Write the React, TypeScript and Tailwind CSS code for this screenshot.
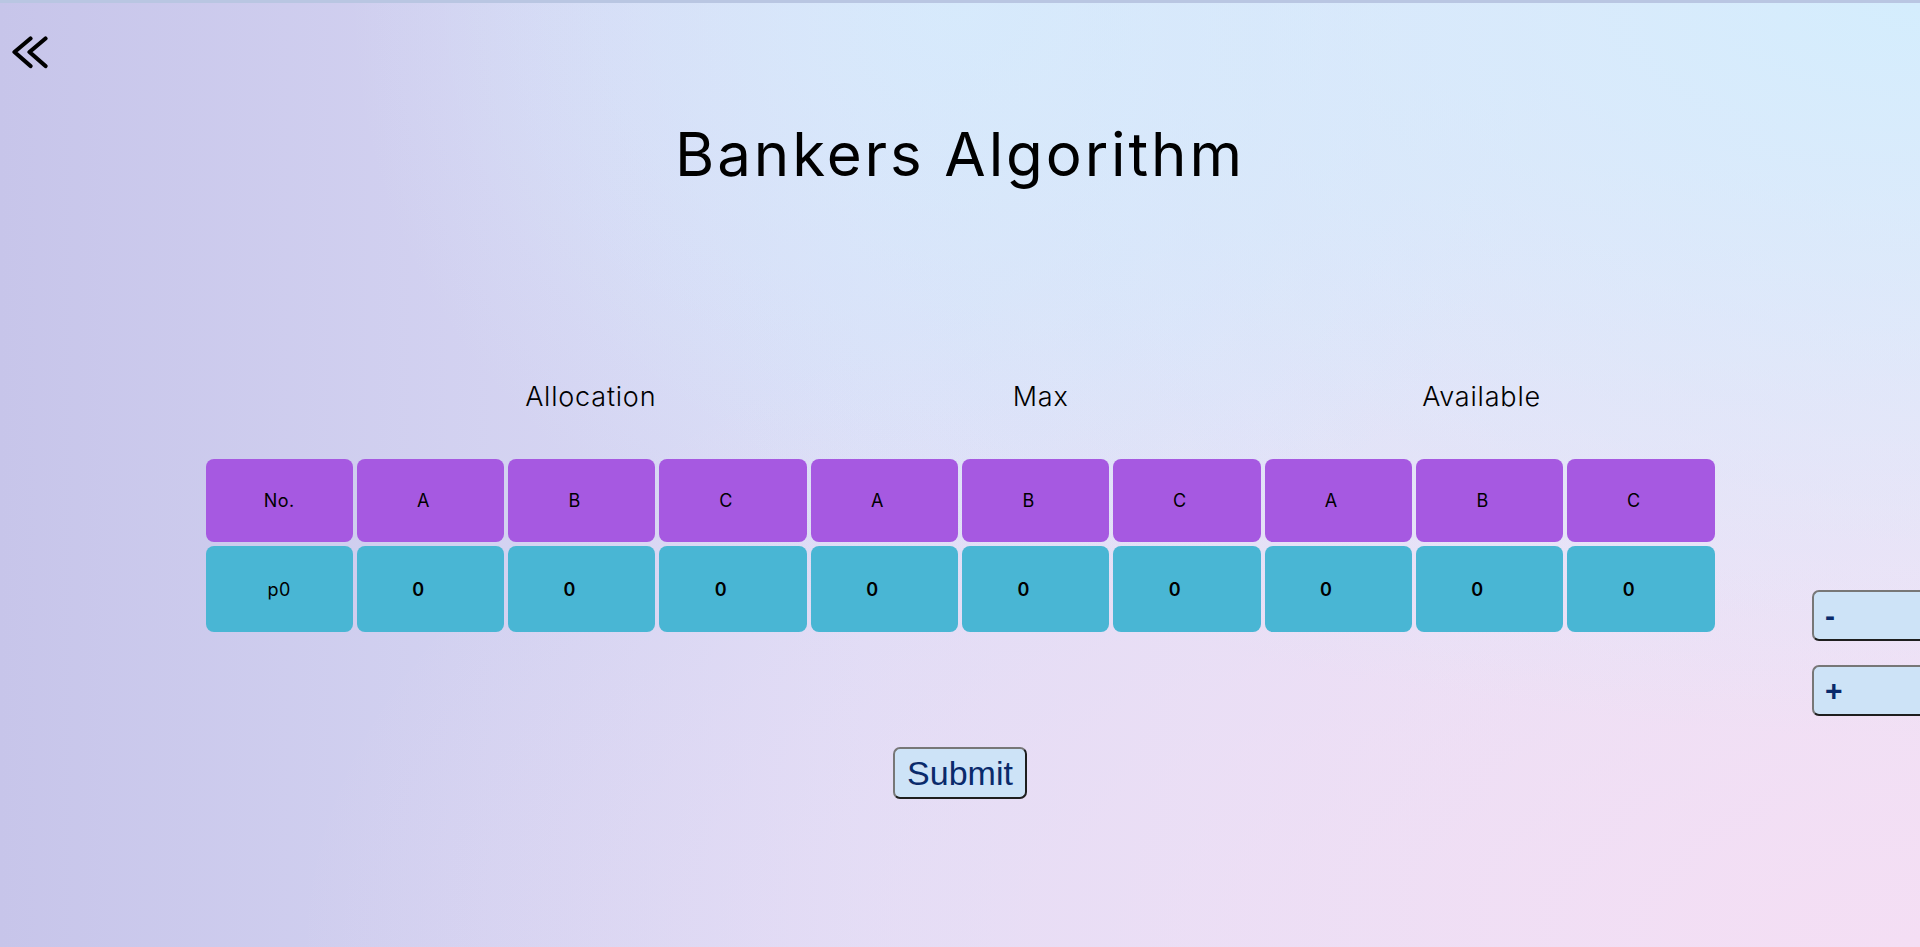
import React from "react";

const heads = ["A", "B", "C", "A", "B", "C", "A", "B", "C"];
const vals = ["0", "0", "0", "0", "0", "0", "0", "0", "0"];

export default function App() {
  return (
    <div className="relative min-h-screen w-full overflow-hidden border-t-[3px] border-t-[#b9c6e2] bg-[radial-gradient(ellipse_at_top_right,#d4edfd_0%,rgba(212,237,253,0)_55%),radial-gradient(ellipse_at_50%_0%,#d8e8fb_0%,rgba(216,232,251,0)_45%),radial-gradient(ellipse_at_bottom_right,#f4def4_0%,rgba(244,222,244,0)_60%),linear-gradient(to_right,#c7c5ea_0%,#dcdcf6_45%,#ebe4f7_100%)] font-['Inter',sans-serif] text-black">
      <div className="pl-[12px] pt-[33px]">
        <svg width="36" height="33" viewBox="0 0 36 33" fill="none" stroke="#000" strokeWidth="4.2" strokeLinecap="round" strokeLinejoin="round">
          <polyline points="18.5,2.5 2.5,16 18.5,30" />
          <polyline points="33.5,2.5 17.5,16 33.5,30" />
        </svg>
      </div>

      <h1 className="mt-[49px] text-center text-[60px] leading-[72px] font-normal tracking-[2.9px]">
        Bankers Algorithm
      </h1>

      <div className="mx-auto mt-[192px] grid w-[1509px] grid-cols-10 gap-x-[4px] text-[27px] leading-[30px] font-light tracking-[0.8px]">
        <div />
        <div className="col-span-3 pl-[18px] text-center">Allocation</div>
        <div className="col-span-3 pl-[10px] text-center">Max</div>
        <div className="col-span-3 pr-[16px] text-center">Available</div>
      </div>

      <div className="mx-auto mt-[47px] grid w-[1509px] grid-cols-10 gap-[4px] text-[18px] tracking-[0.5px]">
        <div className="flex h-[83px] items-center justify-center rounded-lg bg-[#a659e1]">No.</div>
        {heads.map((h, i) => (
          <div key={i} className="flex h-[83px] items-center justify-center rounded-lg bg-[#a659e1] pr-[14px]">
            {h}
          </div>
        ))}
        <div className="flex h-[86px] items-center justify-center rounded-lg bg-[#49b6d4]">p0</div>
        {vals.map((v, i) => (
          <div key={i} className="flex h-[86px] items-center justify-center rounded-lg bg-[#49b6d4] pr-[24px] font-semibold">
            {v}
          </div>
        ))}
      </div>

      <div className="mt-[115px] flex justify-center">
        <button className="h-[52px] w-[134px] rounded-[7px] border-2 border-t-[#777] border-l-[#777] border-r-[#1e1e1e] border-b-[#1e1e1e] bg-[#cde3f7] font-['Liberation_Sans',Arial,sans-serif] text-[34px] leading-none text-[#0a2a6b]">
          Submit
        </button>
      </div>

      <button className="absolute top-[587px] left-[1812px] h-[51px] w-[160px] rounded-[7px] border-2 border-t-[#777] border-l-[#777] border-r-[#1e1e1e] border-b-[#1e1e1e] bg-[#cde3f7] pl-[11px] text-left font-['Liberation_Sans',Arial,sans-serif] text-[30px] leading-none font-bold text-[#0a2a6b]">
        -
      </button>
      <button className="absolute top-[662px] left-[1812px] h-[51px] w-[160px] rounded-[7px] border-2 border-t-[#777] border-l-[#777] border-r-[#1e1e1e] border-b-[#1e1e1e] bg-[#cde3f7] pl-[11px] text-left font-['Liberation_Sans',Arial,sans-serif] text-[30px] leading-none font-bold text-[#0a2a6b]">
        +
      </button>
    </div>
  );
}
